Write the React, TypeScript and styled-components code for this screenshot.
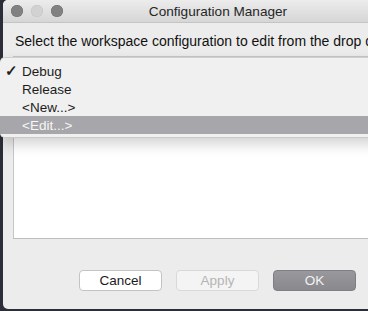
import React from "react";
import styled, { createGlobalStyle } from "styled-components";

const GlobalStyle = createGlobalStyle`
  html, body {
    margin: 0;
    padding: 0;
    width: 368px;
    height: 311px;
    overflow: hidden;
    background: #2b2e36;
    font-family: "Liberation Sans", Arial, sans-serif;
    -webkit-font-smoothing: antialiased;
  }
`;

const Window = styled.div`
  position: relative;
  margin-left: 3px;
  width: 430px;
  height: 309px;
  background: #ececec;
  border-radius: 5px;
  display: flex;
  flex-direction: column;
`;

const TitleBar = styled.div`
  height: 22px;
  flex: none;
  display: grid;
  grid-template-columns: 1fr auto 1fr;
  align-items: center;
  padding: 0 8px;
  background: linear-gradient(#ececec, #d6d6d6);
  border-bottom: 1px solid #c4c4c4;
  border-radius: 5px 5px 0 0;
`;

const Lights = styled.div`
  display: flex;
  gap: 8px;
`;

const Light = styled.span<{ $color: string; $edge: string }>`
  width: 12px;
  height: 12px;
  border-radius: 50%;
  background: ${(p) => p.$color};
  box-shadow: inset 0 0 0 0.5px ${(p) => p.$edge};
`;

const Title = styled.div`
  font-size: 13.6px;
  color: #262626;
  padding-top: 1px;
`;

const Body = styled.div`
  flex: 1;
  display: flex;
  flex-direction: column;
  padding: 10px 10px 18px 10px;
`;

const Prompt = styled.div`
  font-size: 14px;
  line-height: 16px;
  color: #111;
  padding-left: 2px;
  white-space: nowrap;
`;

const ListBox = styled.div`
  margin-top: 7px;
  height: 181px;
  background: #fff;
  border: 1px solid #c6c6c6;
  border-bottom-color: #bdbdbd;
`;

const Buttons = styled.div`
  margin-top: 31px;
  display: flex;
  gap: 14px;
  padding-left: 66px;
`;

const Button = styled.div<{ $kind: "normal" | "disabled" | "default" }>`
  width: 83px;
  height: 21px;
  box-sizing: border-box;
  border-radius: 4px;
  display: flex;
  align-items: center;
  justify-content: center;
  font-size: 13.5px;
  border: 1px solid
    ${(p) => (p.$kind === "default" ? "#7f7e83" : p.$kind === "disabled" ? "#d9d9d9" : "#c3c3c3")};
  background: ${(p) =>
    p.$kind === "default"
      ? "linear-gradient(#99989d, #89888d)"
      : p.$kind === "disabled"
      ? "#f4f4f4"
      : "#ffffff"};
  color: ${(p) => (p.$kind === "default" ? "#f2f2f2" : p.$kind === "disabled" ? "#b4b4b4" : "#1a1a1a")};
`;

const Menu = styled.div`
  position: absolute;
  left: -3px;
  top: 57px;
  width: 440px;
  padding: 4px 0 3px;
  background: #f0f0f0;
  border-top: 1px solid #cfcfcf;
  border-bottom: 1px solid #c9c9c9;
  border-radius: 5px;
  box-shadow: 0 6px 14px rgba(0, 0, 0, 0.18);
`;

const Item = styled.div<{ $active?: boolean }>`
  height: 18px;
  display: flex;
  align-items: center;
  padding-left: 5px;
  font-size: 13.5px;
  color: ${(p) => (p.$active ? "#f6f6f6" : "#1c1c1c")};
  background: ${(p) => (p.$active ? "#a7a6ab" : "transparent")};
`;

const Check = styled.span`
  width: 17px;
  font-size: 15px;
  font-weight: bold;
  color: #222;
`;

const items = ["Debug", "Release", "<New...>", "<Edit...>"];

export default function App() {
  return (
    <>
      <GlobalStyle />
      <Window>
        <TitleBar>
          <Lights>
            <Light $color="#818181" $edge="#6e6e6e" />
            <Light $color="#d2d2d2" $edge="#c2c2c2" />
            <Light $color="#818181" $edge="#6e6e6e" />
          </Lights>
          <Title>Configuration Manager</Title>
          <span />
        </TitleBar>
        <Body>
          <Prompt>Select the workspace configuration to edit from the drop down list</Prompt>
          <ListBox />
          <Buttons>
            <Button $kind="normal">Cancel</Button>
            <Button $kind="disabled">Apply</Button>
            <Button $kind="default">OK</Button>
          </Buttons>
        </Body>
        <Menu>
          {items.map((name, i) => (
            <Item key={name} $active={i === 3}>
              <Check>{i === 0 ? "✓" : ""}</Check>
              {name}
            </Item>
          ))}
        </Menu>
      </Window>
    </>
  );
}
